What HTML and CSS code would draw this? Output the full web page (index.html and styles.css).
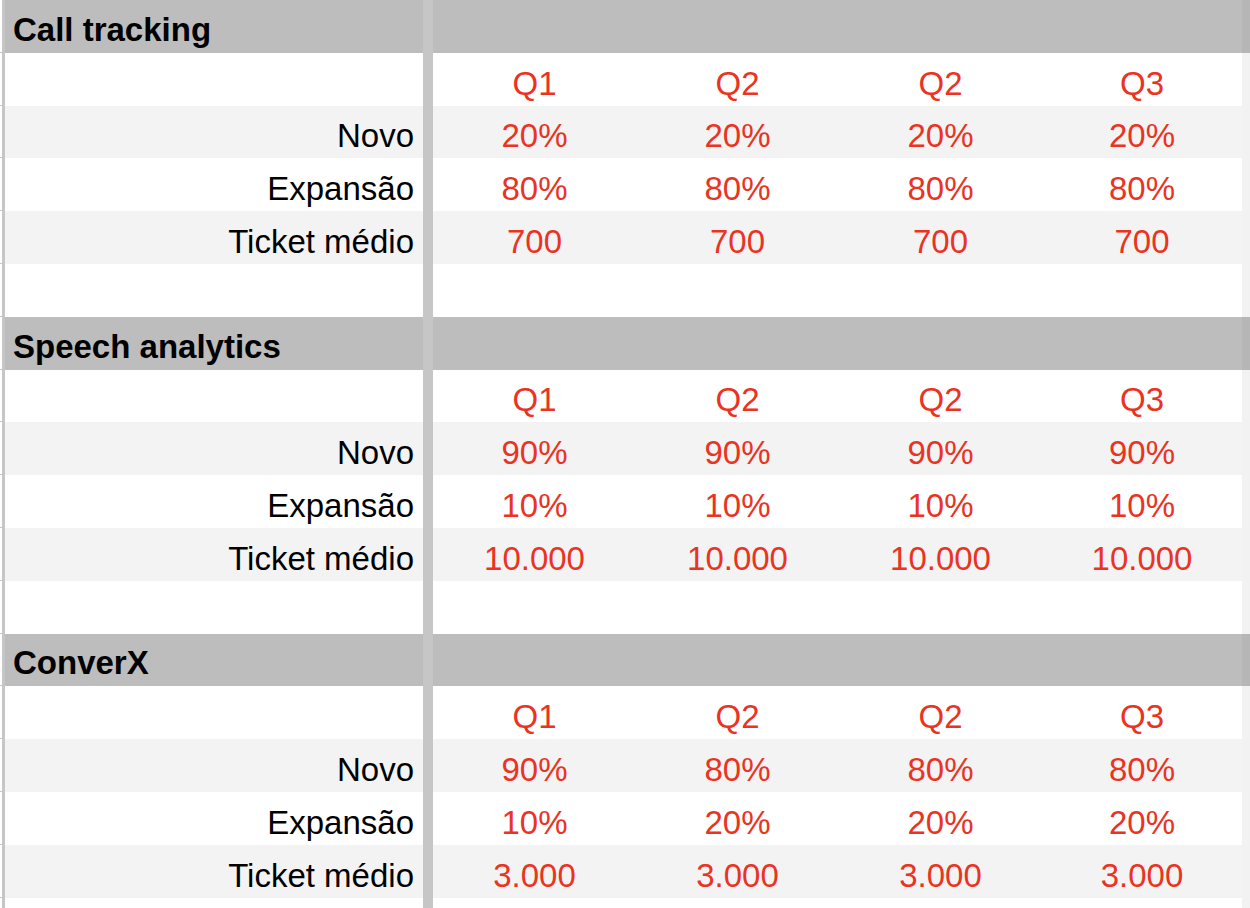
FILE: index.html
```html
<!DOCTYPE html>
<html lang="pt">
<head>
<meta charset="utf-8">
<title>Planilha</title>
<link rel="stylesheet" href="styles.css">
</head>
<body>
<div class="sheet">
  <!-- Call tracking -->
  <div class="row head"><div class="tick"></div><div class="line"></div><div class="label title">Call tracking</div><div class="bar"></div><div class="val"></div><div class="val"></div><div class="val"></div><div class="val"></div><div class="edge"></div></div>
  <div class="row"><div class="tick"></div><div class="line"></div><div class="label"></div><div class="bar"></div><div class="val">Q1</div><div class="val">Q2</div><div class="val">Q2</div><div class="val">Q3</div><div class="edge"></div></div>
  <div class="row alt"><div class="tick"></div><div class="line"></div><div class="label">Novo</div><div class="bar"></div><div class="val">20%</div><div class="val">20%</div><div class="val">20%</div><div class="val">20%</div><div class="edge"></div></div>
  <div class="row"><div class="tick"></div><div class="line"></div><div class="label">Expansão</div><div class="bar"></div><div class="val">80%</div><div class="val">80%</div><div class="val">80%</div><div class="val">80%</div><div class="edge"></div></div>
  <div class="row alt"><div class="tick"></div><div class="line"></div><div class="label">Ticket médio</div><div class="bar"></div><div class="val">700</div><div class="val">700</div><div class="val">700</div><div class="val">700</div><div class="edge"></div></div>
  <div class="row"><div class="tick"></div><div class="line"></div><div class="label"></div><div class="bar"></div><div class="val"></div><div class="val"></div><div class="val"></div><div class="val"></div><div class="edge"></div></div>

  <!-- Speech analytics -->
  <div class="row head"><div class="tick"></div><div class="line"></div><div class="label title">Speech analytics</div><div class="bar"></div><div class="val"></div><div class="val"></div><div class="val"></div><div class="val"></div><div class="edge"></div></div>
  <div class="row"><div class="tick"></div><div class="line"></div><div class="label"></div><div class="bar"></div><div class="val">Q1</div><div class="val">Q2</div><div class="val">Q2</div><div class="val">Q3</div><div class="edge"></div></div>
  <div class="row alt"><div class="tick"></div><div class="line"></div><div class="label">Novo</div><div class="bar"></div><div class="val">90%</div><div class="val">90%</div><div class="val">90%</div><div class="val">90%</div><div class="edge"></div></div>
  <div class="row"><div class="tick"></div><div class="line"></div><div class="label">Expansão</div><div class="bar"></div><div class="val">10%</div><div class="val">10%</div><div class="val">10%</div><div class="val">10%</div><div class="edge"></div></div>
  <div class="row alt"><div class="tick"></div><div class="line"></div><div class="label">Ticket médio</div><div class="bar"></div><div class="val">10.000</div><div class="val">10.000</div><div class="val">10.000</div><div class="val">10.000</div><div class="edge"></div></div>
  <div class="row"><div class="tick"></div><div class="line"></div><div class="label"></div><div class="bar"></div><div class="val"></div><div class="val"></div><div class="val"></div><div class="val"></div><div class="edge"></div></div>

  <!-- ConverX -->
  <div class="row head"><div class="tick"></div><div class="line"></div><div class="label title">ConverX</div><div class="bar"></div><div class="val"></div><div class="val"></div><div class="val"></div><div class="val"></div><div class="edge"></div></div>
  <div class="row"><div class="tick"></div><div class="line"></div><div class="label"></div><div class="bar"></div><div class="val">Q1</div><div class="val">Q2</div><div class="val">Q2</div><div class="val">Q3</div><div class="edge"></div></div>
  <div class="row alt"><div class="tick"></div><div class="line"></div><div class="label">Novo</div><div class="bar"></div><div class="val">90%</div><div class="val">80%</div><div class="val">80%</div><div class="val">80%</div><div class="edge"></div></div>
  <div class="row"><div class="tick"></div><div class="line"></div><div class="label">Expansão</div><div class="bar"></div><div class="val">10%</div><div class="val">20%</div><div class="val">20%</div><div class="val">20%</div><div class="edge"></div></div>
  <div class="row alt"><div class="tick"></div><div class="line"></div><div class="label">Ticket médio</div><div class="bar"></div><div class="val">3.000</div><div class="val">3.000</div><div class="val">3.000</div><div class="val">3.000</div><div class="edge"></div></div>
  <div class="row"><div class="tick"></div><div class="line"></div><div class="label"></div><div class="bar"></div><div class="val"></div><div class="val"></div><div class="val"></div><div class="val"></div><div class="edge"></div></div>
</div>
</body>
</html>
```
FILE: styles.css
```css
html, body {
  margin: 0;
  padding: 0;
  overflow: hidden;
  background: #ffffff;
}

.sheet {
  width: 1250px;
  font-family: "Liberation Sans", Arial, sans-serif;
  font-size: 33px;
  color: #000;
}

.row {
  display: grid;
  grid-template-columns: 2px 3px 418px 10px 203px 203px 203px 200px 8px;
  height: 52.8px;
  background: #ffffff;
}

.row.alt {
  background: #f3f3f3;
}

.row.head {
  background: #bdbdbd;
}

.tick {
  background: #ffffff;
  border-bottom: 1px solid #c6c6c6;
  box-sizing: border-box;
}

.line {
  background: #c6c6c6;
}

.bar {
  background: #c6c6c6;
}

.edge {
  background: #f2f2f2;
}

.row.head .edge {
  background: #b6b6b6;
}

.label,
.val {
  display: flex;
  align-items: flex-end;
  line-height: 33px;
  padding-bottom: 6px;
  box-sizing: border-box;
  white-space: nowrap;
}

.label {
  justify-content: flex-end;
  padding-right: 9px;
}

.label.title {
  justify-content: flex-start;
  padding-left: 8px;
  padding-right: 0;
  font-weight: bold;
  padding-bottom: 7px;
}

.val {
  justify-content: center;
  color: #ea3323;
}
```
